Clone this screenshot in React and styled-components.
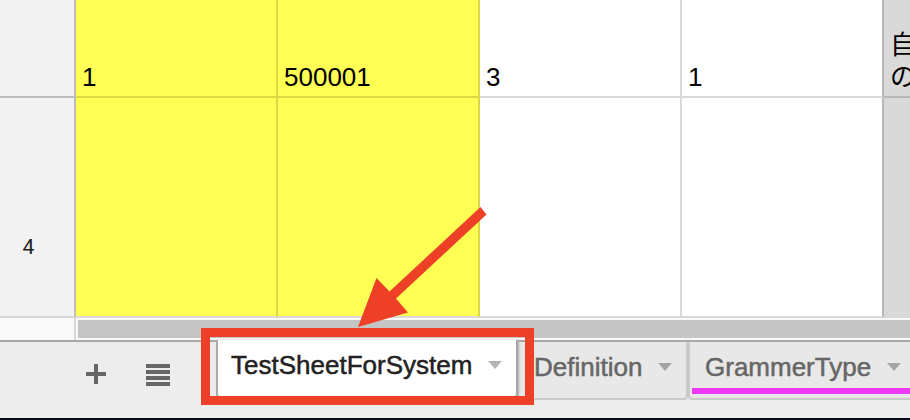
import React from "react";
import styled, { createGlobalStyle } from "styled-components";

const GlobalStyle = createGlobalStyle`
  * { box-sizing: border-box; }
  body {
    margin: 0;
    background: #ededed;
    font-family: "Liberation Sans", "Noto Sans CJK JP", sans-serif;
  }
`;

const Page = styled.main`
  position: relative;
  display: flex;
  flex-direction: column;
  min-height: 100vh;
  overflow: hidden;
  background: #ededed;
  border-bottom: 2px solid #050b18;
`;

const Sheet = styled.table`
  width: 100%;
  table-layout: fixed;
  border-collapse: separate;
  border-spacing: 0;
  color: #000;
  font-size: 26px;
  line-height: 32px;
`;

const Col = styled.col`
  width: ${(p) => p.$width};
`;

const Row = styled.tr`
  height: ${(p) => p.$height}px;
`;

const RowHeader = styled.th`
  padding: 0;
  background: #f2f2f2;
  border-right: 2px solid #bdbdbd;
  border-bottom: 2px solid ${(p) => (p.$last ? "#d9d9d9" : "#bdbdbd")};
  color: #222;
  font: 400 21px/24px Roboto, sans-serif;
  text-align: center;
  vertical-align: middle;
  ${(p) => p.$last && "padding-top: 80px; padding-right: 17px;"}
`;

const tones = {
  plain: { fill: "#fff", right: "#d9d9d9", bottom: "#d9d9d9" },
  edge: { fill: "#fff", right: "#b7b7b7", bottom: "#d9d9d9" },
  yellow: { fill: "#ffff54", right: "#d9d946", bottom: "#d9d946" },
  grey: { fill: "#d9d9d9", right: "#b7b7b7", bottom: "#b7b7b7" },
};

const Cell = styled.td`
  padding: 0 0 3px 6px;
  overflow: hidden;
  white-space: nowrap;
  vertical-align: bottom;
  background: ${(p) => tones[p.$tone].fill};
  border-right: ${(p) => (p.$tone === "grey" ? 0 : 2)}px solid ${(p) => tones[p.$tone].right};
  border-bottom: 2px solid ${(p) => (p.$last ? "#d9d9d9" : tones[p.$tone].bottom)};
`;

const ScrollRow = styled.div`
  display: flex;
  height: 22px;
  background: #f9f9f9;
`;

const ScrollCorner = styled.div`
  flex: 0 0 76px;
  border-right: 2px solid #d9d9d9;
`;

const ScrollThumb = styled.div`
  flex: 1;
  margin: 2px 0 2px 2px;
  background: #c5c5c5;
`;

const TabBar = styled.footer`
  display: flex;
  align-items: flex-start;
  height: 78px;
  border-top: 2px solid #a8a8a8;
  background: #ededed;
`;

const Tools = styled.div`
  display: flex;
  flex: 0 0 216px;
  gap: 34px;
  padding: 18px 0 0 82px;
`;

const ToolButton = styled.button`
  width: 28px;
  height: 28px;
  padding: 0;
  border: 0;
  background: none;
  color: #666;

  svg { display: block; }
`;

const Tabs = styled.nav`
  display: flex;
  flex: 1;
  min-width: 0;
`;

const Tab = styled.button`
  position: relative;
  display: flex;
  align-items: center;
  flex: none;
  gap: 16px;
  width: ${(p) => p.$width}px;
  height: 58px;
  padding: 0 12px 6px 15px;
  border: 2px solid #cacaca;
  border-top: 0;
  border-radius: 0 0 4px 4px;
  background: #e8e8e8;
  color: #666;
  font: 26px/30px "Liberation Sans", sans-serif;
  white-space: nowrap;
  -webkit-text-stroke: 0.5px currentColor;

  svg { flex: none; }
`;

const ActiveTab = styled(Tab)`
  margin-top: -2px;
  padding-left: 13px;
  border-color: #aaa;
  background: #fff;
  color: #222;
  box-shadow: 1px 0 2px #aaa;
  z-index: 1;
`;

const FollowingTab = styled(Tab)`
  padding-left: 16px;
  border-left: 0;
`;

const TabColor = styled.span`
  position: absolute;
  right: 2px;
  bottom: 4px;
  left: 2px;
  height: 6px;
  background: #ee39f7;
`;

const Highlight = styled.span`
  position: absolute;
  inset: -12px -18px -9px -17px;
  border: 9px solid #ed4026;
  pointer-events: none;
`;

const Pointer = styled.svg`
  position: absolute;
  top: 200px;
  left: 350px;
  z-index: 2;
  pointer-events: none;
`;

function Caret({ color = "#a5a5a5" }) {
  return (
    <svg width="14" height="8" viewBox="0 0 14 8" aria-hidden="true">
      <path d="M0 0h14L7 8z" fill={color} />
    </svg>
  );
}

export default function App() {
  return (
    <>
      <GlobalStyle />
      <Page>
        <Sheet>
          <colgroup>
            <Col $width="76px" />
            <Col $width="202px" />
            <Col $width="202px" />
            <Col $width="202px" />
            <Col $width="202px" />
            <Col $width="auto" />
          </colgroup>
          <tbody>
            <Row $height={98}>
              <RowHeader scope="row" />
              <Cell $tone="yellow">1</Cell>
              <Cell $tone="yellow">500001</Cell>
              <Cell $tone="plain">3</Cell>
              <Cell $tone="edge">1</Cell>
              <Cell $tone="grey">自<br />の</Cell>
            </Row>
            <Row $height={220}>
              <RowHeader scope="row" $last>4</RowHeader>
              <Cell $tone="yellow" $last />
              <Cell $tone="yellow" $last />
              <Cell $tone="plain" $last />
              <Cell $tone="edge" $last />
              <Cell $tone="grey" $last />
            </Row>
          </tbody>
        </Sheet>
        <ScrollRow>
          <ScrollCorner />
          <ScrollThumb />
        </ScrollRow>
        <TabBar>
          <Tools>
            <ToolButton aria-label="Add sheet">
              <svg width="28" height="28" viewBox="0 0 28 28">
                <path d="M14 4v20M4 14h20" stroke="currentColor" strokeWidth="4" />
              </svg>
            </ToolButton>
            <ToolButton aria-label="All sheets">
              <svg width="28" height="28" viewBox="0 0 28 28">
                <path d="M2 6h24M2 12h24M2 18h24M2 24h24" stroke="currentColor" strokeWidth="4" />
              </svg>
            </ToolButton>
          </Tools>
          <Tabs aria-label="Sheets">
            <ActiveTab $width={302} aria-current="page">
              TestSheetForSystem
              <Caret color="#b5b5b5" />
              <Highlight />
            </ActiveTab>
            <FollowingTab $width={170}>
              Definition
              <Caret />
            </FollowingTab>
            <Tab $width={230}>
              GrammerType
              <Caret />
              <TabColor />
            </Tab>
          </Tabs>
        </TabBar>
        <Pointer width="140" height="130" viewBox="350 200 140 130" aria-hidden="true">
          <path d="M358 327L376.500 278L389.500 291.500L480.500 207L486.500 214.500L396 298.500L408 312.500Z" fill="#ed4026" />
        </Pointer>
      </Page>
    </>
  );
}
